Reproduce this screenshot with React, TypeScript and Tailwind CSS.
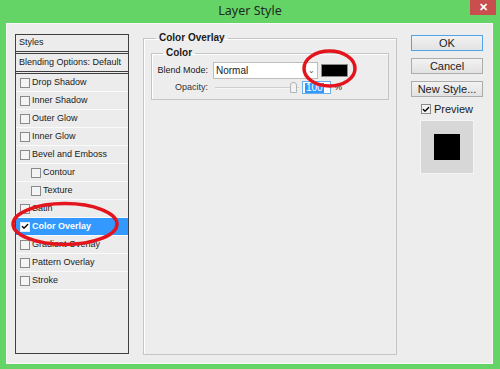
import { Check } from 'lucide-react'

const styleRows = [
  { label: 'Drop Shadow' },
  { label: 'Inner Shadow' },
  { label: 'Outer Glow' },
  { label: 'Inner Glow' },
  { label: 'Bevel and Emboss' },
  { label: 'Contour', sub: true },
  { label: 'Texture', sub: true },
  { label: 'Satin' },
  { label: 'Color Overlay', active: true },
  { label: 'Gradient Overlay' },
  { label: 'Pattern Overlay' },
  { label: 'Stroke' },
]

function Box({ checked, light }: { checked?: boolean; light?: boolean }) {
  return (
    <span
      className={`flex h-[10px] w-[10px] shrink-0 items-center justify-center border ${
        light ? 'border-[#dfe9f5] bg-white' : 'border-[#8a8a8a] bg-[#f4f4f4]'
      }`}
    >
      {checked && <Check size={9} strokeWidth={4} className="text-black" />}
    </span>
  )
}

function Button({ children, primary }: { children: string; primary?: boolean }) {
  return (
    <div
      className={`flex h-[16px] w-[72px] items-center justify-center border bg-gradient-to-b from-[#f2f2f2] to-[#e2e2e2] text-[11px] leading-none text-[#1b1b1b] ${
        primary ? 'border-[#4fa3e8]' : 'border-[#acacac]'
      }`}
    >
      {children}
    </div>
  )
}

export default function App() {
  return (
    <div className="relative flex h-[369px] w-[500px] flex-col overflow-hidden bg-[#65d467] font-['Liberation_Sans',Arial,sans-serif]">
      {/* title bar */}
      <div className="relative flex h-[23px] shrink-0 items-center justify-center">
        <span className="font-['Noto_Sans',sans-serif] text-[12.5px] text-[#1d2a1d]">Layer Style</span>
        <div className="absolute right-[4px] top-0 flex h-[15px] w-[26px] items-center justify-center bg-[#c94f4f] text-[11px] font-bold text-white">
          ✕
        </div>
      </div>

      {/* dialog body */}
      <div className="mx-[6px] flex h-[341px] w-[487px] items-start border border-[#f8f8f8] bg-[#ededed]">
        {/* styles list */}
        <div className="ml-[8px] mt-[10px] flex h-[320px] w-[114px] flex-col border border-[#3f3f3f] bg-[#ececec] text-[9px] text-[#1a1a1a]">
          <div className="flex h-[19px] items-center border-b-[3px] border-double border-[#3f3f3f] px-[3px]">Styles</div>
          <div className="flex h-[20px] items-center border-b-[3px] border-double border-[#3f3f3f] px-[3px]">
            Blending Options: Default
          </div>
          {styleRows.map((r) => (
            <div
              key={r.label}
              className={`flex h-[18px] items-center gap-[2px] border-b border-[#fafafa] ${r.sub ? 'pl-[15px]' : 'pl-[4px]'} ${
                r.active ? 'bg-[#3399ff] font-bold text-white' : ''
              }`}
            >
              <Box checked={r.active} light={r.active} />
              <span>{r.label}</span>
            </div>
          ))}
        </div>

        {/* settings */}
        <fieldset className="ml-[14px] mt-[9px] h-[322px] w-[254px] border border-[#c5c5c5] px-[7px] pb-0 pt-[5px] shadow-[inset_1px_1px_0_#fff]">
          <legend className="ml-[5px] px-[3px] text-[10px] font-bold leading-none text-[#1a1a1a]">Color Overlay</legend>
          <fieldset className="h-[52px] w-[238px] border border-[#c5c5c5] px-[5px] shadow-[inset_1px_1px_0_#fff]">
            <legend className="ml-[6px] px-[3px] text-[10px] font-bold leading-none text-[#1a1a1a]">Color</legend>
            <div className="mt-[4px] flex items-center text-[9px] text-[#1a1a1a]">
              <span className="w-[51px] text-right">Blend Mode:</span>
              <div className="ml-[5px] flex h-[17px] w-[105px] items-center justify-between border border-[#bdbdbd] bg-white pl-[2px] pr-[2px]">
                <span className="text-[10px]">Normal</span>
                <span className="text-[8px] text-[#555]">⌄</span>
              </div>
              <div className="ml-[3px] h-[13px] w-[27px] border border-[#8c8c8c] bg-black" />
            </div>
            <div className="mt-[2px] flex items-center text-[9px] text-[#1a1a1a]">
              <span className="w-[51px] text-right text-[#333]">Opacity:</span>
              <div className="relative ml-[7px] flex h-[12px] w-[84px] items-center">
                <div className="h-[2px] w-full border-t border-[#cfcfcf] bg-[#f6f6f6]" />
                <div className="absolute right-[2px] top-0 h-[11px] w-[7px] rounded-t-[3px] border border-[#b4b4b4] bg-[#f2f2f2]" />
              </div>
              <div className="ml-[3px] flex h-[13px] w-[29px] items-center border border-[#6aaee9] bg-white pl-[2px]">
                <span className="bg-[#3399ff] px-[1px] text-[10px] leading-[10px] text-white">100</span>
              </div>
              <span className="ml-[3px] text-[9px]">%</span>
            </div>
          </fieldset>
        </fieldset>

        {/* buttons */}
        <div className="ml-[14px] mt-[11px] flex flex-col items-center">
          <Button primary>OK</Button>
          <div className="mt-[7px]">
            <Button>Cancel</Button>
          </div>
          <div className="mt-[7px]">
            <Button>New Style...</Button>
          </div>
          <div className="mt-[4px] flex items-center gap-[3px] text-[11px] text-[#1a1a1a]">
            <Box checked />
            <span>Preview</span>
          </div>
          <div className="mt-[2px] flex h-[54px] w-[54px] items-center justify-center border border-[#f4f4f4] bg-[#d7d7d7]">
            <div className="h-[26px] w-[26px] bg-black" />
          </div>
        </div>
      </div>

      {/* red annotation rings */}
      <svg className="pointer-events-none absolute left-0 top-0" width="500" height="369">
        <ellipse cx="65" cy="224" rx="52" ry="20.5" fill="none" stroke="#e3141b" strokeWidth="3.5" />
        <ellipse cx="329.5" cy="68.5" rx="25.5" ry="17.5" fill="none" stroke="#e3141b" strokeWidth="3.5" />
      </svg>
    </div>
  )
}
